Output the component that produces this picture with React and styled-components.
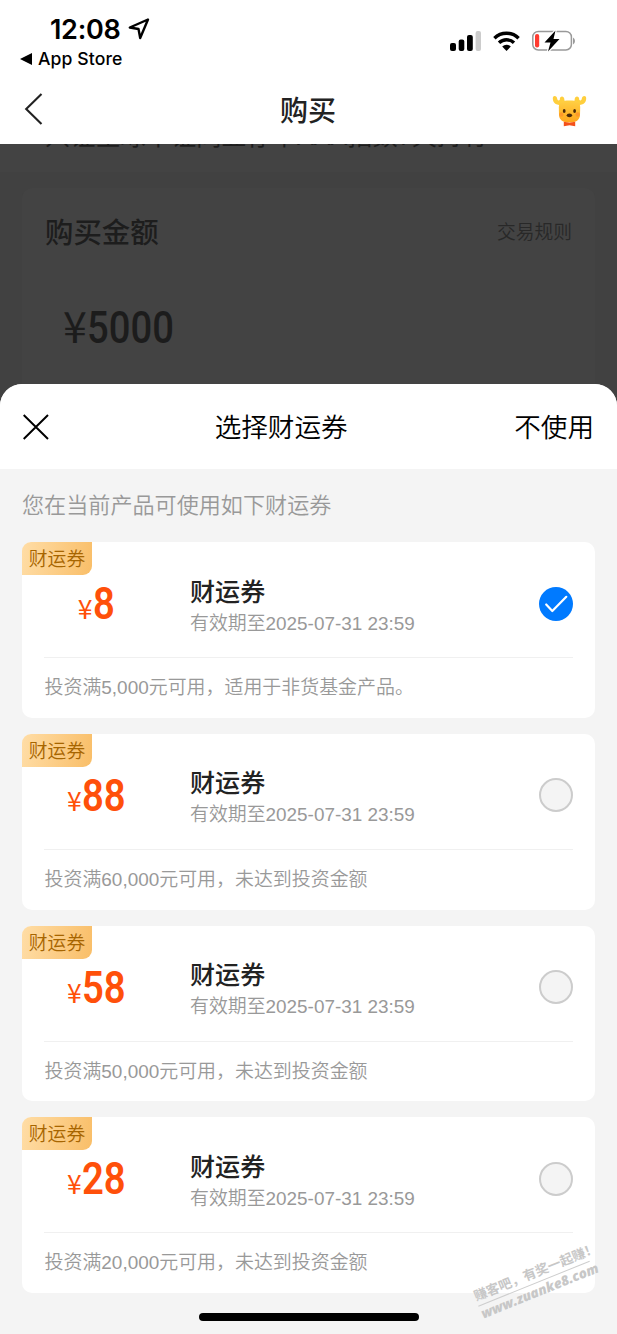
import React from "react";
import styled, { createGlobalStyle } from "styled-components";

const GlobalStyle = createGlobalStyle`
  * { box-sizing: border-box; }
  body {
    margin: 0;
    background: #f4f4f4;
    font-family: "Liberation Sans", "Noto Sans CJK SC", sans-serif;
    color: #000;
  }
`;

const Screen = styled.div`
  width: 617px;
  height: 1334px;
  display: flex;
  flex-direction: column;
  overflow: hidden;
  background: #414141;
`;

const StatusBar = styled.header`
  flex: none;
  height: 74px;
  padding: 0 42px 0 20px;
  display: flex;
  justify-content: space-between;
  background: #fff;
`;

const StatusLeft = styled.div`
  padding-top: 12px;
  font-family: Inter, sans-serif;
`;

const Clock = styled.div`
  display: flex;
  align-items: center;
  gap: 8px;
  height: 34px;
  padding-left: 30px;
  font-size: 27px;
  font-weight: 600;
  letter-spacing: -0.3px;
`;

const BackToApp = styled.div`
  display: flex;
  align-items: center;
  gap: 6px;
  height: 25px;
  font-size: 17.6px;
  font-weight: 500;
  letter-spacing: 0.1px;
`;

const StatusIcons = styled.div`
  display: flex;
  align-items: center;
  height: 82px;
  gap: 12px;
`;

const NavBar = styled.nav`
  flex: none;
  height: 70px;
  padding: 0 30px 0 24px;
  display: grid;
  grid-template-columns: 60px 1fr 55px;
  align-items: center;
  justify-items: center;
  background: #fff;

  > :first-child { justify-self: start; }
  > :last-child { justify-self: end; margin-top: 3px; }
`;

const NavTitle = styled.h1`
  margin: 0 0 1px;
  font-family: "Noto Sans CJK SC", sans-serif;
  font-size: 28px;
  line-height: 40px;
  font-weight: 500;
  color: #222;
`;

const Behind = styled.section`
  flex: none;
  height: 240px;
  overflow: hidden;
  color: #1d1d1d;
`;

const FundStrip = styled.div`
  height: 28px;
  overflow: hidden;
  background: #434343;
`;

const FundName = styled.div`
  margin-top: -23px;
  padding-left: 45px;
  font-size: 25.2px;
  line-height: 30px;
  white-space: nowrap;
`;

const AmountCard = styled.div`
  margin: 16px 22px 0;
  height: 220px;
  padding: 22px 23px;
  border-radius: 10px;
  background: #434343;
`;

const AmountHead = styled.div`
  display: flex;
  justify-content: space-between;
  align-items: center;
  height: 40px;
  font-family: "Noto Sans CJK SC", sans-serif;
  font-size: 28.4px;
  font-weight: 500;
`;

const Rules = styled.span`
  font-size: 18.8px;
  font-weight: 350;
  color: #282828;
`;

const AmountValue = styled.div`
  display: flex;
  align-items: baseline;
  margin: 49px 0 0 18px;
  font: 500 45px/50px Roboto, sans-serif;
  color: #1c1c1c;
`;

const AmountYen = styled.span`
  width: 24px;
  font: 400 43px/50px "Noto Sans CJK SC", sans-serif;
`;

const Condensed = styled.span`
  display: inline-block;
  transform: scaleX(0.85);
  transform-origin: left center;
`;

const Sheet = styled.main`
  flex: 1;
  display: flex;
  flex-direction: column;
  overflow: hidden;
  border-radius: 22px 22px 0 0;
  background: #f4f4f4;
`;

const SheetHead = styled.div`
  flex: none;
  height: 85px;
  padding: 0 23px;
  display: flex;
  align-items: center;
  justify-content: space-between;
  background: #fff;
  font-family: "Noto Sans CJK SC", sans-serif;
  font-size: 26.6px;
`;

const SheetTitle = styled.h2`
  margin: 0 1px 3px 0;
  font-size: inherit;
  font-weight: 350;
`;

const SkipButton = styled.span`
  margin-bottom: 3px;
  font-weight: 350;
`;

const Note = styled.p`
  flex: none;
  margin: 0;
  height: 73px;
  padding-left: 22px;
  font: 350 22.1px/69px "Noto Sans CJK SC", sans-serif;
  color: #999;
`;

const CouponList = styled.div`
  display: flex;
  flex-direction: column;
  gap: 16px;
  padding: 0 22px;
`;

const Card = styled.article`
  position: relative;
  height: 175.75px;
  padding: 0 22px;
  border-radius: 10px;
  background: #fff;
`;

const Tag = styled.span`
  position: absolute;
  left: 0;
  top: 0;
  width: 70px;
  height: 33px;
  border-radius: 9px 0 9px 0;
  background: linear-gradient(100deg, #ffdda6, #f9be68);
  color: #a76500;
  font: 350 18.8px/31px "Noto Sans CJK SC", sans-serif;
  text-align: center;
`;

const CardMain = styled.div`
  height: 116px;
  padding-top: 8px;
  display: grid;
  grid-template-columns: 146px 1fr auto;
  align-items: center;
  border-bottom: 1px solid #f0f0f0;
`;

const Price = styled.div`
  width: 104px;
  padding-top: 5px;
  display: flex;
  justify-content: center;
  align-items: baseline;
  color: #ff500a;
`;

const Yen = styled.span`
  width: 15px;
  font: 400 26.5px/50px "Noto Sans CJK SC", sans-serif;
`;

const Digits = styled.span`
  width: ${(p) => p.$count * 21.6}px;
  font: 600 45px/50px Roboto, sans-serif;
  white-space: nowrap;
`;

const Info = styled.div`
  display: flex;
  flex-direction: column;
  gap: 2px;
  padding-top: 2px;
`;

const Name = styled.h3`
  margin: 0;
  font: 500 25.1px/36px "Noto Sans CJK SC", sans-serif;
  color: #222;
`;

const Expiry = styled.span`
  font-size: 18.9px;
  font-weight: 350;
  line-height: 28px;
  color: #999;
`;

const Radio = styled.span`
  width: 34px;
  height: 34px;
  display: grid;
  place-items: center;
  border-radius: 50%;
  border: ${(p) => (p.$on ? "none" : "2px solid #ccc")};
  background: ${(p) => (p.$on ? "#007aff" : "#f4f4f4")};
`;

const Condition = styled.p`
  margin: 0;
  padding-left: 0.5px;
  font-size: 18.95px;
  font-weight: 350;
  line-height: 60px;
  color: #999;
  white-space: nowrap;
`;

const HomeIndicator = styled.div`
  flex: none;
  width: 220px;
  height: 8px;
  margin: 20px auto 0;
  border-radius: 4px;
  background: #000;
`;

const Watermark = styled.div`
  position: absolute;
  left: 473px;
  top: 1263px;
  width: 122px;
  transform: rotate(-22deg);
  color: #c7c7c7;
  font-weight: 700;
  white-space: nowrap;
`;

const WatermarkTop = styled.div`
  width: 120px;
  font: 700 13.2px/20px "Noto Sans CJK SC", sans-serif;
  border-bottom: 1px solid #cecece;
`;

const WatermarkUrl = styled.div`
  font: italic 800 13.6px/15px "Open Sans", sans-serif;
`;

const coupons = [
  { value: "8", rule: "投资满5,000元可用，适用于非货基金产品。", on: true },
  { value: "88", rule: "投资满60,000元可用，未达到投资金额" },
  { value: "58", rule: "投资满50,000元可用，未达到投资金额" },
  { value: "28", rule: "投资满20,000元可用，未达到投资金额" },
];

const LocationIcon = () => (
  <svg width="22" height="22" viewBox="0 0 22 22" fill="none" stroke="#000" strokeWidth="2.4" strokeLinejoin="round">
    <path d="M20 1.5 L1.8 9.5 L10.5 11 L12.2 20 Z" />
  </svg>
);

const SignalIcon = () => (
  <svg width="31" height="20" viewBox="0 0 31 20">
    <rect x="0" y="12" width="6" height="8" rx="2" />
    <rect x="8.7" y="8.5" width="5.6" height="11.5" rx="2" />
    <rect x="17" y="4" width="5.8" height="16" rx="2" />
    <rect x="25.6" y="0" width="5.4" height="20" rx="2" fill="#ccc" />
  </svg>
);

const WifiIcon = () => (
  <svg width="27" height="20" viewBox="0 0 27 20" fill="none" stroke="#000" strokeWidth="3.4">
    <path d="M1.4 7.2 A17.2 17.2 0 0 1 25.6 7.2" />
    <path d="M6 11.8 A10.8 10.8 0 0 1 21 11.8" />
    <path d="M9.2 15.6 A6.2 6.2 0 0 1 17.8 15.6 L13.5 20 Z" fill="#000" stroke="none" />
  </svg>
);

const BatteryIcon = () => (
  <svg width="43" height="22" viewBox="0 0 43 22">
    <rect x="0.8" y="1.4" width="38.6" height="18.6" rx="5.5" fill="none" stroke="#999" strokeWidth="1.5" />
    <path d="M41 7.5 Q43 8.5 43 11 T41 14.5Z" fill="#999" />
    <rect x="3" y="4" width="4.2" height="13.5" rx="2" fill="#ff3b30" />
    <path d="M23.5 0.6 L12.5 12.6 H18.5 L16 21.5 L27.5 9 H21.5 Z" stroke="#fff" strokeWidth="2.5" paintOrder="stroke" />
  </svg>
);

const BackIcon = () => (
  <svg width="20" height="34" viewBox="0 0 20 34" fill="none" stroke="#222" strokeWidth="2.1">
    <path d="M17.5 2 L2.2 17 L17.5 32" />
  </svg>
);

const CloseIcon = () => (
  <svg width="26" height="26" viewBox="0 0 26 26" stroke="#000" strokeWidth="2">
    <path d="M0.7 1 L25 25 M25 1 L0.7 25" />
  </svg>
);

const CheckIcon = () => (
  <svg width="34" height="34" viewBox="0 0 34 34" fill="none" stroke="#fff" strokeWidth="2.2" strokeLinecap="round" strokeLinejoin="round">
    <path d="M7.2 17.5 L13.3 24 L27.3 9.8" />
  </svg>
);

const DeerIcon = () => (
  <svg width="35" height="32" viewBox="0 0 35 32">
    <defs>
      <linearGradient id="deer" x1="0" y1="0" x2="0" y2="1">
        <stop offset="0" stopColor="#ffd044" />
        <stop offset="1" stopColor="#ffa61c" />
      </linearGradient>
    </defs>
    <path
      d="M11.5 10.5 C5 10.5 .8 8.5 .8 3.5 C.8 0 5 .3 5.3 4.2 C6 5.8 7 5.8 7.8 4.8 C7.3 1 11.6 .2 12.2 3.6 L13 9 M23.5 10.5 C30 10.5 34.2 8.5 34.2 3.5 C34.2 0 30 .3 29.7 4.2 C29 5.8 28 5.8 27.2 4.8 C27.7 1 23.4 .2 22.8 3.6 L22 9"
      fill="#ffcf3d"
    />
    <path d="M6.8 12 C7 7 10 5.5 17.5 5.5 S28 7 28.2 12 L28 20 C27.8 25 24 27.5 17.5 27.5 S7.2 25 7 20Z" fill="url(#deer)" />
    <circle cx="9.3" cy="19.5" r="2.2" fill="#ff8a2a" opacity=".65" />
    <circle cx="25.7" cy="19.5" r="2.2" fill="#ff8a2a" opacity=".65" />
    <ellipse cx="12.2" cy="16" rx="1.4" ry="1.9" fill="#4a2a0a" />
    <ellipse cx="22.6" cy="16" rx="1.4" ry="1.9" fill="#4a2a0a" />
    <ellipse cx="17.4" cy="20.3" rx="2.7" ry="1.9" fill="#4a2a0a" />
    <path d="M11.8 26.8 L17.5 27.8 L23.2 26.8 V31.3 L17.5 30.2 L11.8 31.3Z" fill="#f4511a" />
  </svg>
);

export default function App() {
  return (
    <Screen>
      <GlobalStyle />
      <StatusBar>
        <StatusLeft>
          <Clock>12:08 <LocationIcon /></Clock>
          <BackToApp>
            <svg width="12" height="12" viewBox="0 0 12 12"><path d="M0 6 L12 0 V12Z" /></svg>
            App Store
          </BackToApp>
        </StatusLeft>
        <StatusIcons>
          <SignalIcon />
          <WifiIcon />
          <BatteryIcon />
        </StatusIcons>
      </StatusBar>
      <NavBar>
        <BackIcon />
        <NavTitle>购买</NavTitle>
        <DeerIcon />
      </NavBar>
      <Behind>
        <FundStrip>
          <FundName>兴证全球中证同业存单AAA指数7天持有</FundName>
        </FundStrip>
        <AmountCard>
          <AmountHead>购买金额<Rules>交易规则</Rules></AmountHead>
          <AmountValue>
            <AmountYen>¥</AmountYen>
            <Condensed>5000</Condensed>
          </AmountValue>
        </AmountCard>
      </Behind>
      <Sheet>
        <SheetHead>
          <CloseIcon />
          <SheetTitle>选择财运券</SheetTitle>
          <SkipButton>不使用</SkipButton>
        </SheetHead>
        <Note>您在当前产品可使用如下财运券</Note>
        <CouponList>
          {coupons.map((c) => (
            <Card key={c.value}>
              <Tag>财运券</Tag>
              <CardMain>
                <Price>
                  <Yen>¥</Yen>
                  <Digits $count={c.value.length}><Condensed>{c.value}</Condensed></Digits>
                </Price>
                <Info>
                  <Name>财运券</Name>
                  <Expiry>有效期至2025-07-31 23:59</Expiry>
                </Info>
                <Radio $on={c.on}>{c.on && <CheckIcon />}</Radio>
              </CardMain>
              <Condition>{c.rule}</Condition>
            </Card>
          ))}
        </CouponList>
        <HomeIndicator />
      </Sheet>
      <Watermark>
        <WatermarkTop>赚客吧，有奖一起赚！</WatermarkTop>
        <WatermarkUrl>www.zuanke8.com</WatermarkUrl>
      </Watermark>
    </Screen>
  );
}
